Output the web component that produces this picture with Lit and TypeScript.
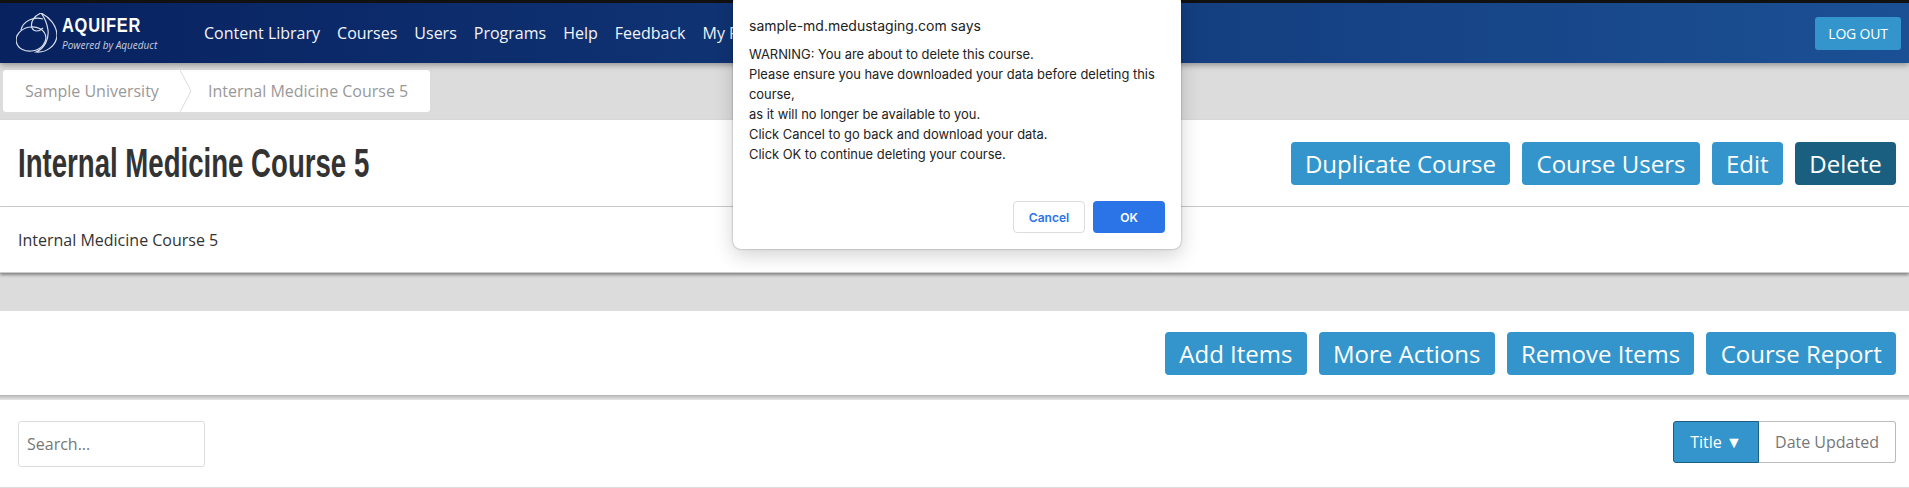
import { LitElement, html, css } from "lit";
import { customElement } from "lit/decorators.js";

@customElement("app-root")
export class AppRoot extends LitElement {
  static styles = css`
    :host { display: block; width: 1909px; height: 488px; overflow: hidden; position: relative; background: #fff; font-family: "Open Sans", sans-serif; color: #333; }
    .nav { height: 60px; border-top: 3px solid #111; background: linear-gradient(90deg, #08215f 0%, #1b5094 100%); display: flex; align-items: center; box-shadow: 0 2px 6px rgba(0,0,0,.35); position: relative; z-index: 2; box-sizing: content-box; }
    .logo { width: 204px; padding-left: 16px; box-sizing: border-box; display: flex; align-items: center; gap: 5px; color: #fff; flex: none; }
    .logo-text { display: flex; flex-direction: column; width: 100px; }
    .brand { display: inline-block; font: bold 21px/20px "Liberation Sans", sans-serif; letter-spacing: 1px; transform: scaleX(.78); transform-origin: left center; white-space: nowrap; }
    .sub { font: italic 10px/12px "Open Sans", sans-serif; color: #c5cede; margin-top: 4px; white-space: nowrap; }
    .links { display: flex; gap: 17px; font-size: 16px; color: #f2f4f8; white-space: nowrap; flex: 1; }
    .logout { margin-right: 8px; background: #3395cb; color: #fff; font-size: 14px; letter-spacing: -.2px; height: 33px; width: 86px; border-radius: 3px; display: flex; align-items: center; justify-content: center; }
    .crumbs-row { height: 57px; background: #dcdcdc; display: flex; padding: 7px 0 8px 3px; box-sizing: border-box; }
    .crumbs { width: 427px; height: 42px; background: #fff; border-radius: 3px; display: flex; align-items: center; font-size: 16px; color: #999; position: relative; }
    .crumb1 { padding-left: 22px; width: 205px; box-sizing: border-box; }
    .chev { position: absolute; left: 177px; top: 0; }
    .bar { display: flex; align-items: center; justify-content: space-between; padding: 0 13px 0 18px; background: #fff; }
    .title-bar { height: 87px; box-shadow: 0 2px 3px rgba(0,0,0,.4); position: relative; border-bottom: 1px solid #ccc; box-sizing: border-box; }
    h1 { margin: 0; font: bold 40px/44px "Liberation Sans", sans-serif; color: #333; transform: scaleX(.69); transform-origin: left center; white-space: nowrap; }
    .btns { display: flex; gap: 12px; }
    .btn { background: #3395cb; color: #fff; font-size: 24px; height: 43px; padding: 0 14.3px; border-radius: 4px; display: flex; align-items: center; white-space: nowrap; }
    .btn.dark { background: #1b5f80; }
    .desc { height: 66px; background: #fff; padding: 0 18px; display: flex; align-items: center; font-size: 16px; color: #333; box-shadow: 0 2px 3px rgba(0,0,0,.4); position: relative; border-bottom: 1px solid #ccc; box-sizing: border-box; }
    .gap { height: 38px; background: #dcdcdc; }
    .actions { height: 84px; box-sizing: border-box; position: relative; }
    .sep { height: 5px; background: linear-gradient(#b4b4b4, #e6e6e6); }
    .toolbar { height: 88px; border-bottom: 1px solid #ddd; box-sizing: border-box; align-items: flex-start; padding-top: 21px; }
    .search { width: 187px; height: 46px; border: 1px solid #ddd; border-radius: 3px; box-sizing: border-box; padding-left: 8px; display: flex; align-items: center; font-size: 16px; color: #777; }
    .seg { display: flex; height: 42px; font-size: 16px; }
    .seg-on { width: 86px; background: #3395cb; border: 1px solid #1b5f80; border-radius: 3px 0 0 3px; box-sizing: border-box; color: #fff; display: flex; align-items: center; justify-content: center; }
    .seg-off { width: 137px; border: 1px solid #bbb; border-left: 0; border-radius: 0 3px 3px 0; box-sizing: border-box; color: #777; display: flex; align-items: center; justify-content: center; }
    .dialog { position: absolute; left: 733px; top: -6px; width: 448px; height: 255px; box-sizing: border-box; background: #fff; border-radius: 8px; box-shadow: 0 0 2px rgba(0,0,0,.4), 0 6px 20px rgba(0,0,0,.18); padding: 22px 16px 0; font-family: Inter, "Liberation Sans", sans-serif; z-index: 5; color: #222; display: flex; flex-direction: column; }
    .origin { font-size: 14px; line-height: 20px; }
    .msg { font-size: 12.9px; line-height: 20px; margin-top: 9px; }
    .dlg-btns { display: flex; justify-content: flex-end; gap: 8px; margin-top: 36px; }
    .dlg-btn { width: 72px; height: 32px; border-radius: 4px; box-sizing: border-box; font-size: 12px; font-weight: 600; display: flex; align-items: center; justify-content: center; }
    .cancel { border: 1px solid #ddd; color: #2a74e8; }
    .ok { background: #2b74e8; color: #fff; }
  `;

  render() {
    const links = ["Content Library", "Courses", "Users", "Programs", "Help", "Feedback", "My Programs"];
    return html`
      <div class="nav">
        <div class="logo">
          <svg width="41" height="40" viewBox="0 0 41 40" fill="none" stroke="#d8deea" stroke-width="1.2">
            <path d="M25 0 C33 4 41 12 41 23 C40 33 30 40 20 39 C29 35 33 26 32 17 C31 10 28 4 25 0 Z"></path>
            <path d="M25 0 C18 3 14 9 16 15 C18 19 23 19 27 15"></path>
            <path d="M27 6 C18 3 7 8 5 17"></path>
            <ellipse cx="15" cy="26" rx="15" ry="12" transform="rotate(-12 15 26)"></ellipse>
          </svg>
          <div class="logo-text"><span class="brand">AQUIFER</span><span class="sub">Powered by Aqueduct</span></div>
        </div>
        <div class="links">${links.map((l) => html`<span>${l}</span>`)}</div>
        <div class="logout">LOG OUT</div>
      </div>
      <div class="crumbs-row">
        <div class="crumbs">
          <span class="crumb1">Sample University</span>
          <svg class="chev" width="12" height="42" fill="none" stroke="#dcdcdc"><path d="M0 0 L11 21 L0 42"></path></svg>
          <span>Internal Medicine Course 5</span>
        </div>
      </div>
      <div class="bar title-bar">
        <h1>Internal Medicine Course 5</h1>
        <div class="btns">
          <span class="btn">Duplicate Course</span><span class="btn">Course Users</span><span class="btn">Edit</span><span class="btn dark">Delete</span>
        </div>
      </div>
      <div class="desc">Internal Medicine Course 5</div>
      <div class="gap"></div>
      <div class="bar actions">
        <span></span>
        <div class="btns">
          <span class="btn">Add Items</span><span class="btn">More Actions</span><span class="btn">Remove Items</span><span class="btn">Course Report</span>
        </div>
      </div>
      <div class="sep"></div>
      <div class="bar toolbar">
        <div class="search">Search...</div>
        <div class="seg"><span class="seg-on">Title ▼</span><span class="seg-off">Date Updated</span></div>
      </div>
      <div class="dialog">
        <div class="origin">sample-md.medustaging.com says</div>
        <div class="msg">WARNING: You are about to delete this course.<br>Please ensure you have downloaded your data before deleting this course,<br>as it will no longer be available to you.<br>Click Cancel to go back and download your data.<br>Click OK to continue deleting your course.</div>
        <div class="dlg-btns"><span class="dlg-btn cancel">Cancel</span><span class="dlg-btn ok">OK</span></div>
      </div>
    `;
  }
}
